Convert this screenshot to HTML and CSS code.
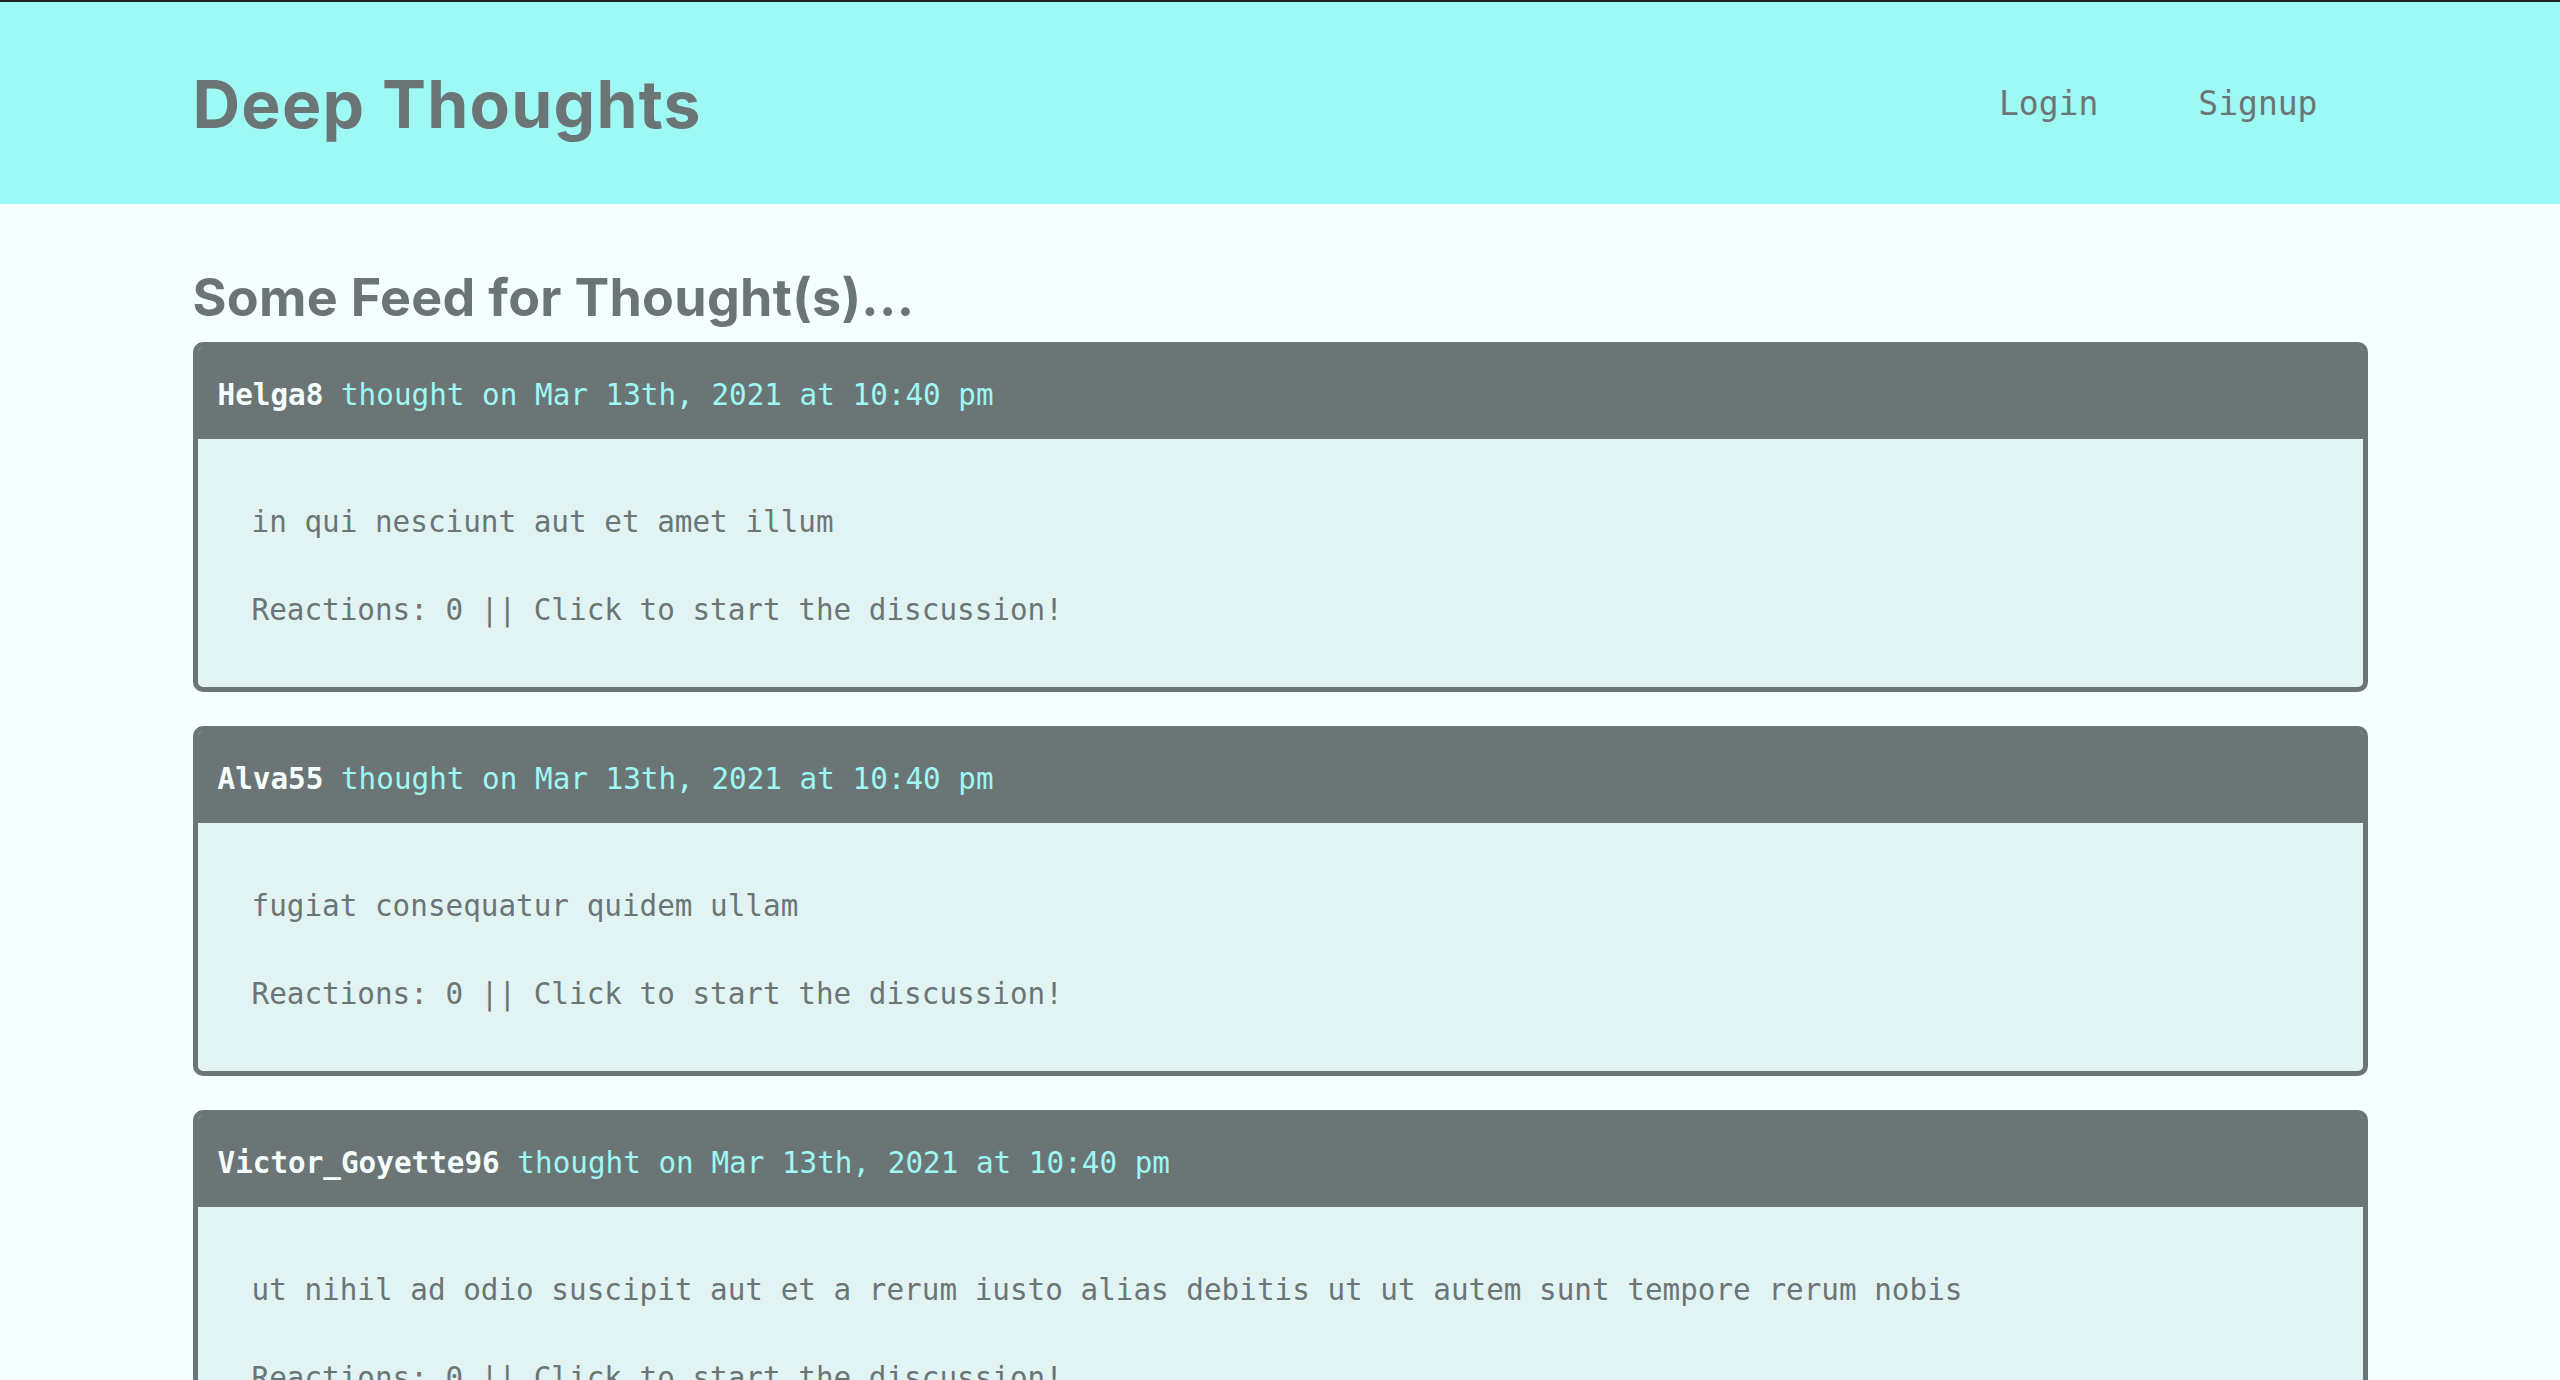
FILE: index.html
```
<!DOCTYPE html>
<html lang="en">
<head>
<meta charset="utf-8">
<title>Deep Thoughts</title>
<link rel="stylesheet" href="styles.css">
</head>
<body>
<header class="site-header">
  <div class="container header-inner">
    <a class="brand" href="#">Deep Thoughts</a>
    <nav class="nav">
      <a href="#">Login</a>
      <a href="#">Signup</a>
    </nav>
  </div>
</header>
<main class="container feed">
  <h2 class="feed-title">Some Feed for Thought(s)...</h2>

  <article class="card">
    <p class="card-header"><span class="username">Helga8</span> thought on Mar 13th, 2021 at 10:40 pm</p>
    <div class="card-body">
      <p>in qui nesciunt aut et amet illum</p>
      <p>Reactions: 0 || Click to start the discussion!</p>
    </div>
  </article>

  <article class="card">
    <p class="card-header"><span class="username">Alva55</span> thought on Mar 13th, 2021 at 10:40 pm</p>
    <div class="card-body">
      <p>fugiat consequatur quidem ullam</p>
      <p>Reactions: 0 || Click to start the discussion!</p>
    </div>
  </article>

  <article class="card">
    <p class="card-header"><span class="username">Victor_Goyette96</span> thought on Mar 13th, 2021 at 10:40 pm</p>
    <div class="card-body">
      <p>ut nihil ad odio suscipit aut et a rerum iusto alias debitis ut ut autem sunt tempore rerum nobis</p>
      <p>Reactions: 0 || Click to start the discussion!</p>
    </div>
  </article>
</main>
</body>
</html>
```
FILE: styles.css
```
html {
  scrollbar-width: none;
}

body {
  margin: 0;
  border-top: 2px solid #1f2222;
  background: #f5fffe;
  color: #6c7576;
  font-family: "DejaVu Sans Mono", "Liberation Mono", monospace;
}

.container {
  width: 2175px;
  margin: 0 auto;
}

.site-header {
  background: #9ef8f3;
}

.header-inner {
  height: 202px;
  display: flex;
  align-items: center;
  justify-content: space-between;
}

.brand {
  font-family: Inter, "Liberation Sans", sans-serif;
  font-weight: 700;
  font-size: 66px;
  line-height: 1;
  color: #6c7576;
  text-decoration: none;
  letter-spacing: 1.2px;
  padding-top: 2px;
}

.nav {
  display: flex;
}

.nav a {
  font-size: 33px;
  line-height: 1;
  padding: 0 50px;
  color: #6c7576;
  text-decoration: none;
}

.feed {
  padding-top: 62px;
}

.feed-title {
  margin: 0 0 13px;
  font-family: Inter, "Liberation Sans", sans-serif;
  font-weight: 700;
  font-size: 52px;
  line-height: 63px;
  color: #6c7576;
  letter-spacing: 0.3px;
}

.card {
  border: 5px solid #6c7576;
  border-radius: 10px;
  background: #e1f4f3;
  overflow: hidden;
  margin-bottom: 34px;
}

.card-header {
  margin: 0;
  padding: 26px 20px 22px;
  background: #6c7576;
  color: #9ef8f3;
  font-size: 29.3px;
  line-height: 44px;
}

.username {
  font-weight: 700;
  color: #f5fffe;
}

.card-body {
  padding: 61px 54px 55px;
  display: flex;
  flex-direction: column;
  gap: 44px;
  font-size: 29.3px;
  line-height: 44px;
}

.card-body p {
  margin: 0;
}
```
